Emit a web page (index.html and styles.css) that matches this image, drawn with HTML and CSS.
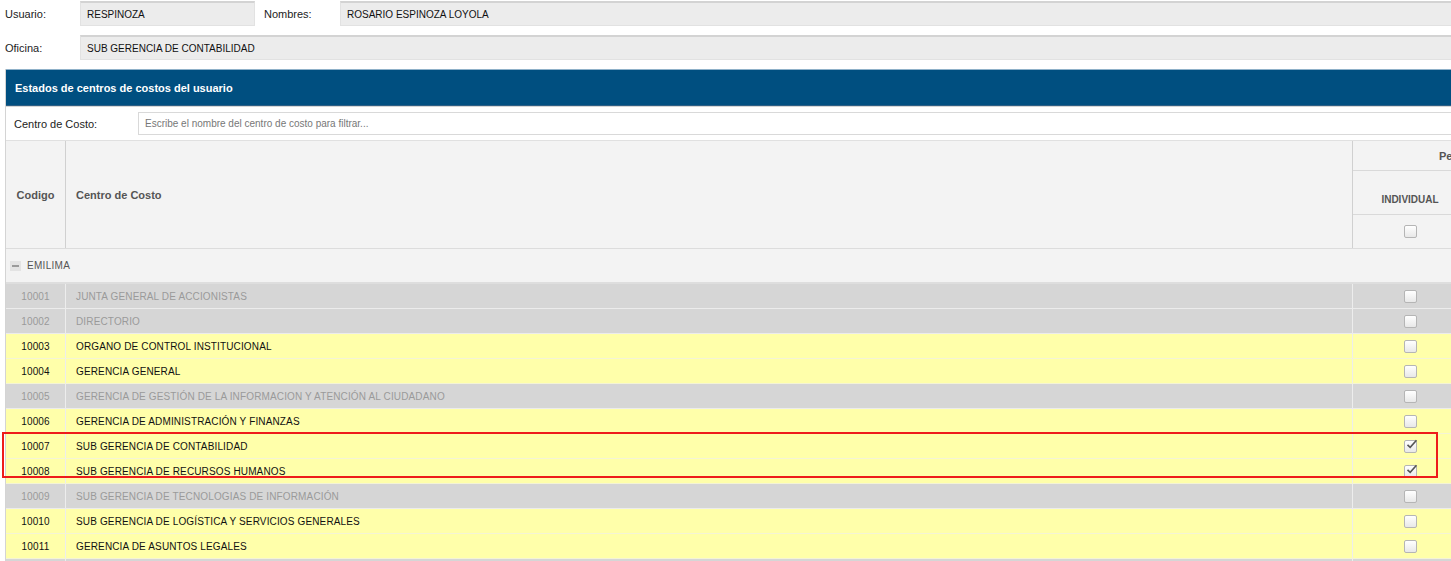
FILE: index.html
```html
<!DOCTYPE html>
<html lang="es">
<head>
<meta charset="utf-8">
<title>Centros de costo</title>
<link rel="stylesheet" href="styles.css">
</head>
<body>
<div class="page">
 <div class="canvas">
  <div class="form">
    <div class="frow">
      <span class="lbl">Usuario:</span>
      <div class="field f-user">RESPINOZA</div>
      <span class="lbl lbl-2">Nombres:</span>
      <div class="field f-grow">ROSARIO ESPINOZA LOYOLA</div>
    </div>
    <div class="frow">
      <span class="lbl">Oficina:</span>
      <div class="field f-grow">SUB GERENCIA DE CONTABILIDAD</div>
    </div>
  </div>

  <div class="panel">
    <div class="ptitle">Estados de centros de costos del usuario</div>
    <div class="filter">
      <span class="flbl">Centro de Costo:</span>
      <div class="finput">Escribe el nombre del centro de costo para filtrar...</div>
    </div>

    <div class="thead">
      <div class="th th-code">Codigo</div>
      <div class="th th-name">Centro de Costo</div>
      <div class="th-group">
        <div class="th-gtitle">Pe</div>
        <div class="th-sub">
          <div class="th-subcell">INDIVIDUAL</div>
        </div>
        <div class="th-sub th-checks">
          <div class="th-subcell"><span class="cb"></span></div>
        </div>
      </div>
    </div>

    <div class="grp"><span class="minus"></span>EMILIMA</div>

    <div class="rows">
      <div class="row off"><div class="c-code">10001</div><div class="c-name">JUNTA GENERAL DE ACCIONISTAS</div><div class="c-chk"><span class="cb"></span></div></div>
      <div class="row off"><div class="c-code">10002</div><div class="c-name">DIRECTORIO</div><div class="c-chk"><span class="cb"></span></div></div>
      <div class="row on"><div class="c-code">10003</div><div class="c-name">ORGANO DE CONTROL INSTITUCIONAL</div><div class="c-chk"><span class="cb"></span></div></div>
      <div class="row on"><div class="c-code">10004</div><div class="c-name">GERENCIA GENERAL</div><div class="c-chk"><span class="cb"></span></div></div>
      <div class="row off"><div class="c-code">10005</div><div class="c-name">GERENCIA DE GESTIÓN DE LA INFORMACION Y ATENCIÓN AL CIUDADANO</div><div class="c-chk"><span class="cb"></span></div></div>
      <div class="row on"><div class="c-code">10006</div><div class="c-name">GERENCIA DE ADMINISTRACIÓN Y FINANZAS</div><div class="c-chk"><span class="cb"></span></div></div>
      <div class="row on"><div class="c-code">10007</div><div class="c-name">SUB GERENCIA DE CONTABILIDAD</div><div class="c-chk"><span class="cb"><svg viewBox="0 0 13 13" width="13" height="13"><path d="M2.5 6.8 L5.2 9.4 L11.5 2.2" fill="none" stroke="#555" stroke-width="1.6"/></svg></span></div></div>
      <div class="row on"><div class="c-code">10008</div><div class="c-name">SUB GERENCIA DE RECURSOS HUMANOS</div><div class="c-chk"><span class="cb"><svg viewBox="0 0 13 13" width="13" height="13"><path d="M2.5 6.8 L5.2 9.4 L11.5 2.2" fill="none" stroke="#555" stroke-width="1.6"/></svg></span></div></div>
      <div class="row off"><div class="c-code">10009</div><div class="c-name">SUB GERENCIA DE TECNOLOGIAS DE INFORMACIÓN</div><div class="c-chk"><span class="cb"></span></div></div>
      <div class="row on"><div class="c-code">10010</div><div class="c-name">SUB GERENCIA DE LOGÍSTICA Y SERVICIOS GENERALES</div><div class="c-chk"><span class="cb"></span></div></div>
      <div class="row on"><div class="c-code">10011</div><div class="c-name">GERENCIA DE ASUNTOS LEGALES</div><div class="c-chk"><span class="cb"></span></div></div>
      <div class="row off"><div class="c-code"></div><div class="c-name"></div><div class="c-chk"></div></div>
    </div>
  </div>
  <div class="mark"></div>
 </div>
</div>
</body>
</html>
```

FILE: styles.css
```css
html, body {
  margin: 0;
  padding: 0;
  background: #fff;
  overflow: hidden;
}
body {
  font-family: "Liberation Sans", Arial, sans-serif;
  color: #222;
  width: 1451px;
  height: 561px;
}
.page {
  width: 1451px;
  height: 561px;
  overflow: hidden;
}
.canvas {
  position: relative;
  width: 1620px;
}
.form {
  padding: 1px 0 0 5px;
  display: flex;
  flex-direction: column;
  gap: 9px;
}
.frow {
  display: flex;
  align-items: center;
  height: 25px;
}
.lbl {
  font-size: 11px;
  color: #222;
  width: 75px;
  flex: none;
}
.lbl-2 {
  width: 76px;
  margin-left: 9px;
}
.field {
  box-sizing: border-box;
  height: 25px;
  background: #ececec;
  border: 1px solid #e2e2e2;
  border-top: 2px solid #d3d3d3;
  font-size: 10px;
  color: #111;
  padding: 0 6px;
  display: flex;
  align-items: center;
}
.f-user { width: 175px; flex: none; }
.f-grow { flex: 1; }

.panel {
  margin: 9px 0 0 5px;
  border-left: 1px solid #d4d4d4;
}
.ptitle {
  box-sizing: border-box;
  height: 37px;
  background: #004f80;
  border-top: 1px solid #8fb1c9;
  border-bottom: 1px solid #2d5f85;
  color: #fff;
  font-weight: bold;
  font-size: 11px;
  padding: 0 9px;
  display: flex;
  align-items: center;
}
.filter {
  box-sizing: border-box;
  height: 35px;
  border-top: 1px solid #d6d6d6;
  border-bottom: 1px solid #e0e0e0;
  padding: 5px 0 5px 8px;
  display: flex;
  align-items: center;
}
.flbl {
  font-size: 11px;
  width: 124px;
  flex: none;
}
.finput {
  flex: 1;
  box-sizing: border-box;
  height: 23px;
  border: 1px solid #d9d9d9;
  background: #fff;
  font-size: 10px;
  color: #777;
  padding: 0 6px;
  display: flex;
  align-items: center;
}

.thead {
  display: flex;
  height: 108px;
  box-sizing: border-box;
  background: #f3f3f3;
  border-bottom: 1px solid #dcdcdc;
  color: #555;
  font-size: 11px;
  font-weight: bold;
}
.th {
  display: flex;
  align-items: center;
  border-right: 1px solid #d0d0d0;
  box-sizing: border-box;
  flex: none;
}
.th-code {
  width: 60px;
  justify-content: center;
}
.th-name {
  width: 1287px;
  padding-left: 10px;
}
.th-group {
  display: flex;
  flex-direction: column;
  flex: 1;
}
.th-gtitle {
  height: 30px;
  box-sizing: border-box;
  border-bottom: 1px solid #d9d9d9;
  display: flex;
  align-items: center;
  padding-left: 86px;
}
.th-sub {
  display: flex;
  height: 44px;
  box-sizing: border-box;
  border-bottom: 1px solid #d9d9d9;
  font-size: 10px;
}
.th-sub:not(.th-checks) .th-subcell {
  padding-top: 14px;
}
.th-checks {
  height: 33px;
  border-bottom: none;
}
.th-subcell {
  width: 114px;
  box-sizing: border-box;
  flex: none;
  display: flex;
  align-items: center;
  justify-content: center;
}

.grp {
  box-sizing: border-box;
  height: 35px;
  background: #f3f3f3;
  border-bottom: 2px solid #dedede;
  font-size: 10px;
  color: #555;
  letter-spacing: 0.3px;
  display: flex;
  align-items: center;
  padding-left: 4px;
}
.minus {
  width: 11px;
  height: 10px;
  background: #e3e3e3;
  margin-right: 6px;
  display: flex;
  align-items: center;
  justify-content: center;
}
.minus::before {
  content: "";
  width: 7px;
  height: 2px;
  background: #9a9a9a;
}

.row {
  display: flex;
  height: 25px;
  box-sizing: border-box;
  border-bottom: 1px solid #ececec;
  font-size: 10px;
  letter-spacing: 0.14px;
}
.row.off { background: #d6d6d6; color: #9a9a9a; }
.row.on { background: #ffffaa; color: #111; border-bottom-color: #f4f4d6; }
.c-code {
  width: 60px;
  flex: none;
  box-sizing: border-box;
  border-right: 1px solid #ededed;
  display: flex;
  align-items: center;
  justify-content: center;
}
.c-name {
  width: 1287px;
  flex: none;
  box-sizing: border-box;
  border-right: 1px solid #ededed;
  padding-left: 10px;
  display: flex;
  align-items: center;
  white-space: nowrap;
}
.c-chk {
  width: 114px;
  flex: none;
  display: flex;
  align-items: center;
  justify-content: center;
}
.cb {
  box-sizing: border-box;
  width: 13px;
  height: 13px;
  border: 1px solid #b5b5b5;
  border-radius: 2px;
  background: linear-gradient(#ffffff, #e8e8e8);
  display: inline-block;
  position: relative;
}
.cb svg {
  position: absolute;
  left: 0;
  top: -3px;
}

.mark {
  position: absolute;
  left: 2px;
  top: 432px;
  width: 1436px;
  height: 46px;
  box-sizing: border-box;
  border: 2px solid #ee1b1b;
  pointer-events: none;
}
```
